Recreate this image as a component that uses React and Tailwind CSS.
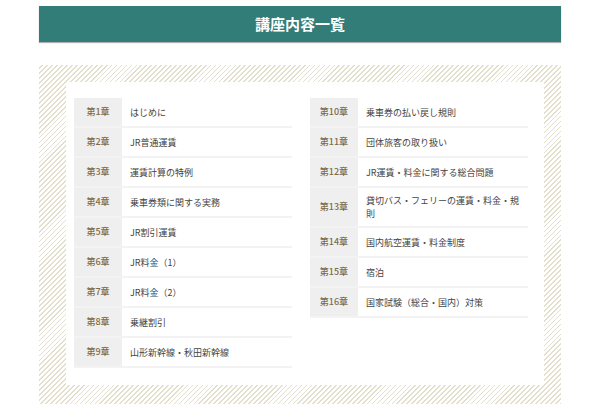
const left=[["第1章","はじめに"],["第2章","JR普通運賃"],["第3章","運賃計算の特例"],["第4章","乗車券類に関する実務"],["第5章","JR割引運賃"],["第6章","JR料金（1）"],["第7章","JR料金（2）"],["第8章","乗継割引"],["第9章","山形新幹線・秋田新幹線"]];
const right=[["第10章","乗車券の払い戻し規則"],["第11章","団体旅客の取り扱い"],["第12章","JR運賃・料金に関する総合問題"],["第13章","貸切バス・フェリーの運賃・料金・規則"],["第14章","国内航空運賃・料金制度"],["第15章","宿泊"],["第16章","国家試験（総合・国内）対策"]];
function T({rows}){return <div className="flex flex-col w-[218px]">{rows.map(([a,b])=>(
<div key={a} className="flex border-b-2 border-[#f3f3f3] min-h-[30px]">
<div className="w-[48px] shrink-0 bg-[#efefef] text-[#7d6c4c] font-medium flex items-center justify-center text-[9px]">{a}</div>
<div className="flex-1 flex items-center px-[8px] py-[6px] text-[9px] text-[#444] leading-[13px]">{b}</div></div>))}</div>}
export default function App(){return <div className="w-[600px] h-[420px] bg-white pt-[6px]" style={{fontFamily:'"Noto Sans CJK JP","Noto Sans",sans-serif'}}>
<div className="mx-[39px] h-[36px] bg-[#327d78] flex items-center justify-center text-white font-bold text-[15px] shadow-[0_1px_1px_rgba(0,0,0,0.3)]">講座内容一覧</div>
<div className="mx-[39px] mt-[23px] h-[339px] p-[17px_17px_19px_27px] bg-[repeating-linear-gradient(-45deg,#e4dfcc_0px,#e4dfcc_1.2px,#fff_1.2px,#fff_3.5px)]">
<div className="bg-white h-full flex gap-[18px] pl-[8px] pt-[16px]"><T rows={left}/><T rows={right}/></div></div></div>}
